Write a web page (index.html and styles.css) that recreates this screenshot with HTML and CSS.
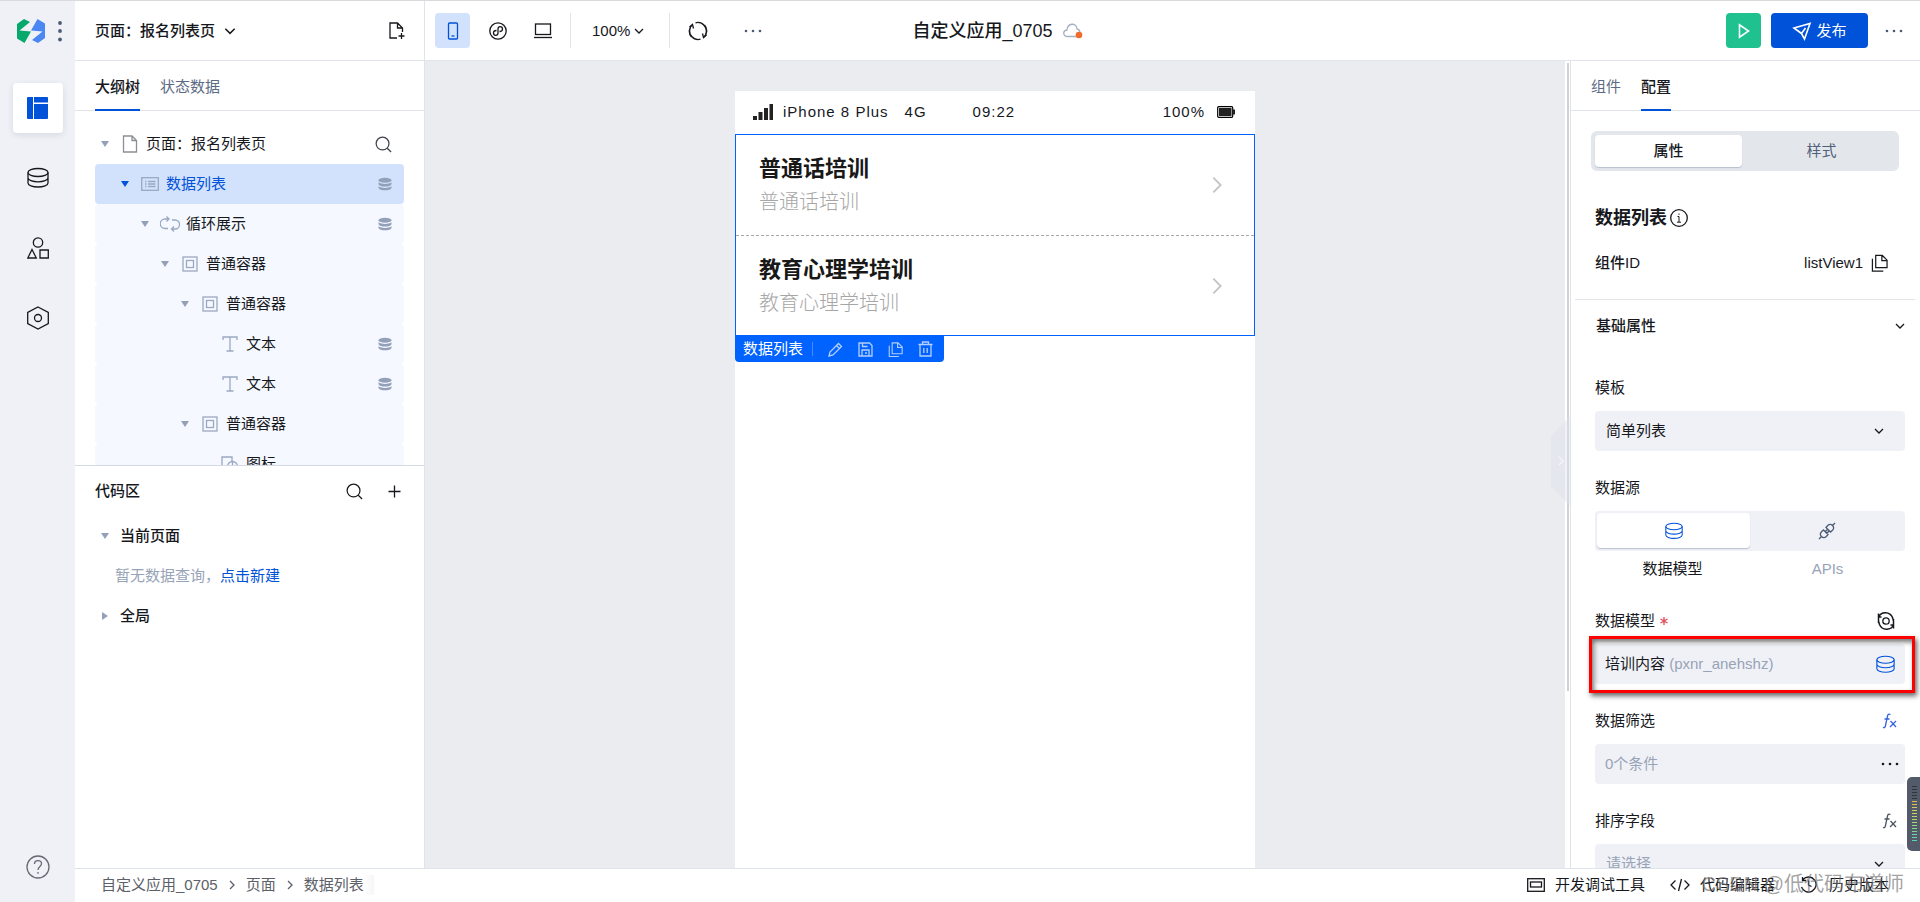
FILE: index.html
```html
<!DOCTYPE html>
<html lang="zh-CN">
<head>
<meta charset="utf-8">
<title>自定义应用_0705</title>
<link rel="stylesheet" href="styles.css">
</head>
<body>
<svg class="sprite" aria-hidden="true">
  <symbol id="chev" viewBox="0 0 12 12"><path d="M2 4l4 4 4-4"/></symbol>
  <symbol id="chev-r" viewBox="0 0 12 12"><path d="M4 2l4 4-4 4"/></symbol>
  <symbol id="search" viewBox="0 0 18 18"><circle cx="8" cy="8" r="6.8"/><path d="M13 13l4 4"/></symbol>
  <symbol id="db" viewBox="0 0 22 22"><ellipse cx="11" cy="5.5" rx="10" ry="4"/><path d="M1 5.500v10.500c0 2.200 4.500 4 10 4s10-1.800 10-4V5.500M1 10.800c0 2.200 4.500 4 10 4s10-1.800 10-4"/></symbol>
  <symbol id="stack" viewBox="0 0 14 14"><ellipse cx="7" cy="3.200" rx="6.500" ry="2.500"/><path d="M.5 5.300C2 6.600 4.500 7 7 7s5-.4 6.500-1.700v2C13 8.800 10.500 9.600 7 9.600S1 8.800.5 7.300zM.5 9.300C2 10.600 4.500 11 7 11s5-.4 6.500-1.700v1.700C13 12.500 10.500 13.300 7 13.300S1 12.500.5 11z"/></symbol>
  <symbol id="box" viewBox="0 0 16 16"><rect x="1" y="1" width="14" height="14"/><rect x="4.500" y="4.500" width="7" height="7"/></symbol>
  <symbol id="text" viewBox="0 0 16 16"><path d="M1 4V1h14v3M8 1v14M4.500 15h7"/></symbol>
  <symbol id="copy" viewBox="0 0 18 18"><path d="M5 1h7l5 5v8H5zM11.500 1v5.500H17M1.500 4.500v13H13"/></symbol>
  <symbol id="fx" viewBox="0 0 16 16"><path d="M8.500 1.500C6.500.5 5.800 1.500 5.400 3.500L3.500 12.500C3.100 14.500 2.200 15 1 14.500M2.500 6h5M8.500 8l5.500 6M14 8l-6 6"/></symbol>
  <symbol id="dots" viewBox="0 0 18 4"><circle cx="2" cy="2" r="1.300"/><circle cx="9" cy="2" r="1.300"/><circle cx="16" cy="2" r="1.300"/></symbol>
</svg>

<div class="app">
  <nav class="rail" aria-label="主导航">
    <div class="brand">
      <svg width="28" height="24" viewBox="0 0 28 24"><path fill="#07a86b" d="M0 5L7 0l6 3L2.500 11.500 14 12.500 7.500 24 0 19.500z"/><path fill="#4a87f3" d="M28 19l-7 5-6-3 10.500-8.500L14 11.500 20.500 0 28 4.500z"/></svg>
      <svg class="solid slate" width="4" height="22" viewBox="0 0 4 22"><circle cx="2" cy="3" r="1.900"/><circle cx="2" cy="11" r="1.900"/><circle cx="2" cy="19.500" r="1.900"/></svg>
    </div>
    <button class="rail-item active" aria-label="页面"><svg width="22" height="22" viewBox="0 0 22 22"><path fill="#0052d9" d="M1 0h5v22H1a1 1 0 0 1-1-1V1a1 1 0 0 1 1-1zM7 0h13a1 1 0 0 1 1 1v4.500H7zM7 7h14v14a1 1 0 0 1-1 1H7z"/></svg></button>
    <button class="rail-item" aria-label="数据"><svg class="line" width="22" height="22"><use href="#db"/></svg></button>
    <button class="rail-item" aria-label="组件"><svg class="line" width="22" height="22" viewBox="0 0 22 22"><circle cx="11" cy="5.500" r="4.700"/><path d="M5 12.500L9.300 21H.8zM13 13h8.300v8H13z"/></svg></button>
    <button class="rail-item" aria-label="设置"><svg class="line" width="22" height="24" viewBox="0 0 22 24"><path d="M11 1l10.300 5.500v11L11 23 .7 17.500v-11z"/><circle cx="11" cy="12" r="3.500"/></svg></button>
    <button class="rail-item help" aria-label="帮助"><svg class="line" width="24" height="24" viewBox="0 0 24 24"><circle cx="12" cy="12" r="11"/><path d="M8.500 9c0-2 1.500-3.300 3.500-3.300S15.500 7 15.500 8.700C15.500 11.500 12 11.500 12 15M12 17v1.800"/></svg></button>
  </nav>

  <div class="main">
    <header class="topbar">
      <div class="start">
        <div class="page-pick">
          <button class="plain strong">页面：报名列表页<svg class="line" width="14" height="14"><use href="#chev"/></svg></button>
          <button class="plain" aria-label="新建页面"><svg class="line" width="17" height="20" viewBox="0 0 17 20"><path d="M8 17H1V2h7.500l5 5v4M8.500 2v5h5M12.500 12v6M9.500 15h6"/></svg></button>
        </div>
        <div class="tools">
          <button class="tool on" aria-label="手机"><svg class="line" width="12" height="18" viewBox="0 0 12 18"><rect x="1.500" y="1" width="9" height="16" rx="1"/><path d="M4.500 14h3"/></svg></button>
          <button class="tool" aria-label="小程序"><svg class="line" width="18" height="18" viewBox="0 0 18 18"><circle cx="9" cy="9" r="8.200"/><path d="M7.500 8.500C5.500 8.500 4.500 9.500 4.500 11s1 2.300 2.200 2.300S9 12.500 9 11V7c0-1.500.8-2.300 2.200-2.300S13.500 5.500 13.500 7s-1 2.500-3 2.500"/></svg></button>
          <button class="tool" aria-label="电脑"><svg class="line" width="18" height="16" viewBox="0 0 18 16"><rect x="1.500" y="1" width="15" height="10.500"/><path d="M0 14.500h18"/></svg></button>
          <span class="rule"></span>
          <button class="plain zoom">100%<svg class="line" width="12" height="12"><use href="#chev"/></svg></button>
          <span class="rule"></span>
          <button class="tool" aria-label="刷新"><svg class="line" width="20" height="20" viewBox="0 0 20 20"><path d="M7.500 1.800A8.500 8.500 0 0 1 17.500 13.500M12.500 18.200A8.500 8.500 0 0 1 2.500 6.500M3.500 16A8.500 8.500 0 0 1 4 4M16.500 4A8.500 8.500 0 0 1 16 16"/><path d="M1.500 6L4.500 3.500 5.500 7.500M18.500 14l-3 2.500-1-4"/></svg></button>
          <button class="tool more" aria-label="更多"><svg class="solid slate" width="18" height="4"><use href="#dots"/></svg></button>
        </div>
      </div>
      <div class="app-title"><h1>自定义应用_0705</h1><svg class="cloud" width="20" height="16" viewBox="0 0 20 16"><path d="M5 13.500C-.5 13.500-.5 7.500 4 7 4.500-.5 13.500-.5 14 6c4 .5 4 7.500-1 7.500z"/><circle cx="16" cy="12" r="3.300"/></svg></div>
      <div class="actions">
        <button class="run" aria-label="预览"><svg width="12" height="16" viewBox="0 0 12 16"><path d="M1.500 1.800v12.400L10.500 8z"/></svg></button>
        <button class="publish"><svg width="20" height="20" viewBox="0 0 20 20"><path d="M2 7L18 2.500 12.500 18l-3-5.500zM9.500 12.500l4-5.500M5.500 9.500l4 3"/></svg>发布</button>
        <button class="plain" aria-label="更多"><svg class="solid slate" width="18" height="4"><use href="#dots"/></svg></button>
      </div>
    </header>

    <div class="work">
      <aside class="left">
        <div class="tabs"><button class="tab sel">大纲树</button><button class="tab">状态数据</button></div>
        <div class="tree">
          <div class="row l0"><i class="tri"></i><span class="ico"><svg class="line" width="16" height="18" viewBox="0 0 16 18"><path d="M1.500 1H10l4.500 4.500V17h-13zM10 1v4.500h4.500"/></svg></span><span>页面：报名列表页</span><button class="plain end" aria-label="搜索"><svg class="line" width="17" height="17"><use href="#search"/></svg></button></div>
          <div class="row l1 cur"><i class="tri"></i><span class="ico"><svg class="line" width="18" height="14" viewBox="0 0 18 14"><rect x=".7" y=".7" width="16.600" height="12.600"/><path d="M4 4.500h1.500M4 7h1.500M4 9.500h1.500M7 4.500h7.500M7 7h7.500M7 9.500h7.500"/></svg></span><span>数据列表</span><svg class="stack end" width="14" height="14"><use href="#stack"/></svg></div>
          <div class="row l2"><i class="tri"></i><span class="ico"><svg class="line" width="20" height="16" viewBox="0 0 20 16"><path d="M9 3H5a4.500 4.500 0 0 0 0 9.500h3M6.500.5L9 3 6.500 5.500M12 4h3a4.300 4.300 0 0 1 0 9H11.500M14 10.500L11.500 13l2.500 2.500"/></svg></span><span>循环展示</span><svg class="stack end" width="14" height="14"><use href="#stack"/></svg></div>
          <div class="row l3"><i class="tri"></i><span class="ico"><svg class="line" width="16" height="16"><use href="#box"/></svg></span><span>普通容器</span></div>
          <div class="row l4"><i class="tri"></i><span class="ico"><svg class="line" width="16" height="16"><use href="#box"/></svg></span><span>普通容器</span></div>
          <div class="row l5"><i class="tri none"></i><span class="ico"><svg class="line" width="16" height="16"><use href="#text"/></svg></span><span>文本</span><svg class="stack end" width="14" height="14"><use href="#stack"/></svg></div>
          <div class="row l5"><i class="tri none"></i><span class="ico"><svg class="line" width="16" height="16"><use href="#text"/></svg></span><span>文本</span><svg class="stack end" width="14" height="14"><use href="#stack"/></svg></div>
          <div class="row l4"><i class="tri"></i><span class="ico"><svg class="line" width="16" height="16"><use href="#box"/></svg></span><span>普通容器</span></div>
          <div class="row l5"><i class="tri none"></i><span class="ico"><svg class="line" width="18" height="16" viewBox="0 0 18 16"><path d="M6 11H1V1h10v4"/><circle cx="11.500" cy="10.500" r="5"/><path d="M11.500 5.500V11"/></svg></span><span>图标</span></div>
        </div>
        <section class="code">
          <div class="code-head"><h2>代码区</h2><button class="plain" aria-label="搜索代码"><svg class="line" width="17" height="17"><use href="#search"/></svg></button><button class="plain" aria-label="新建"><svg class="line" width="13" height="13" viewBox="0 0 13 13"><path d="M6.500 0.500v12M.5 6.500h12"/></svg></button></div>
          <div class="code-row strong"><i class="tri"></i><span>当前页面</span></div>
          <div class="code-row empty"><span>暂无数据查询，<a href="#new">点击新建</a></span></div>
          <div class="code-row strong"><i class="tri shut"></i><span>全局</span></div>
        </section>
      </aside>

      <main class="canvas">
        <div class="phone">
          <div class="status">
            <svg class="signal" width="20" height="16" viewBox="0 0 20 16"><path d="M0 12h4v4H0zM5.500 8h4v8h-4zM11 4h4v12h-4zM16.500 0H20v16h-3.500z"/></svg>
            <span>iPhone 8 Plus</span><span class="net">4G</span><span class="time">09:22</span><span class="power">100%</span>
            <svg width="18" height="12" viewBox="0 0 18 12"><rect x=".7" y=".7" width="15" height="10.600" rx="1" fill="none" stroke="#000" stroke-width="1.200"/><path d="M2 2h12.500v8H2zM16 3.500h2v5h-2z"/></svg>
          </div>
          <div class="list">
            <div class="item"><div><h3>普通话培训</h3><p>普通话培训</p></div><svg width="22" height="22" viewBox="0 0 12 12"><use href="#chev-r"/></svg></div>
            <div class="item"><div><h3>教育心理学培训</h3><p>教育心理学培训</p></div><svg width="22" height="22" viewBox="0 0 12 12"><use href="#chev-r"/></svg></div>
          </div>
          <div class="tag">
            <span>数据列表</span>
            <button class="plain" aria-label="编辑"><svg class="line" width="15" height="15" viewBox="0 0 15 15"><path d="M1 14l1-4 8.500-8.500 3 3L5 13zM8.500 3.500l3 3"/></svg></button>
            <button class="plain" aria-label="保存"><svg class="line" width="15" height="15" viewBox="0 0 15 15"><path d="M1 1h10.500L14 3.500V14H1zM4.500 1v3.500h5M4 14V8h7v6M7 11h2"/></svg></button>
            <button class="plain" aria-label="复制"><svg class="line" width="15" height="15"><use href="#copy"/></svg></button>
            <button class="plain" aria-label="删除"><svg class="line" width="15" height="16" viewBox="0 0 15 16"><path d="M.5 3.500h14M4.500 3V1h6v2M2 3.500V15h11V3.500M5.800 7v5M9.200 7v5"/></svg></button>
          </div>
        </div>
      </main>

      <aside class="right">
        <div class="gutter"><i class="thumb"></i></div>
        <button class="fold" aria-label="收起"><svg width="12" height="12"><use href="#chev-r"/></svg></button>
        <div class="panel">
          <div class="tabs"><button class="tab">组件</button><button class="tab sel">配置</button></div>
          <div class="config">
            <div class="switch"><button class="sel">属性</button><button>样式</button></div>
            <div class="name"><h2>数据列表</h2><svg class="line" width="18" height="18" viewBox="0 0 18 18"><circle cx="9" cy="9" r="8.300"/><path d="M7.500 7.500H9V13M7 13.200h4M9 4.500v1.300" stroke-width="1"/></svg></div>
            <div class="ident"><strong>组件ID</strong><span>listView1</span><button class="plain" aria-label="复制ID"><svg class="line" width="17" height="18"><use href="#copy"/></svg></button></div>
            <button class="plain section">基础属性<svg class="line" width="12" height="12"><use href="#chev"/></svg></button>
            <div class="form">
              <div class="field"><label class="cap" for="tpl">模板</label>
                <div class="select"><select id="tpl"><option>简单列表</option></select><svg class="line" width="12" height="12"><use href="#chev"/></svg></div></div>
              <div class="field"><div class="cap">数据源</div>
                <div class="source"><button class="sel" aria-label="数据模型"><svg class="line" width="18" height="18"><use href="#db"/></svg></button><button aria-label="APIs"><svg class="line" width="18" height="18" viewBox="0 0 18 18"><path d="M1 17l2.500-2.500M14.500 3.500L17 1M3.500 14.500c-1.500-1.500-1.200-3.500 0-4.800L5.500 8l4.500 4.500-1.700 2c-1.300 1.200-3.300 1.500-4.800 0zM14.500 3.500c1.500 1.500 1.200 3.500 0 4.800L12.500 10 8 5.500l1.700-2c1.300-1.200 3.300-1.500 4.800 0zM7.200 9.700L9.700 7.200M8.800 11.300l2.500-2.500"/></svg></button></div>
                <div class="names"><span>数据模型</span><span class="dim">APIs</span></div></div>
              <div class="field"><div class="cap"><span>数据模型</span><svg class="req" role="img" aria-label="必填" width="8" height="8" viewBox="0 0 8 8"><path d="M4 0v8M.5 2l7 4M7.500 2l-7 4"/></svg><button class="plain end refresh" aria-label="刷新模型"><svg class="line" width="18" height="18" viewBox="0 0 18 18"><circle cx="9" cy="9" r="3.200"/><path d="M1.500 11V1.500M1.500 5A7.700 7.700 0 0 1 15.500 5.500L16.500 9M16.500 7v9.500M16.500 13A7.700 7.700 0 0 1 2.500 12.500L1.500 9M1.500 5h3M16.500 13h-3" stroke-width="1.500"/></svg></button></div>
                <button class="box model"><span>培训内容 <span class="dim">(pxnr_anehshz)</span></span><svg class="line" width="19" height="19"><use href="#db"/></svg></button></div>
              <div class="field"><div class="cap"><span>数据筛选</span><button class="plain end fx blue" aria-label="筛选表达式"><svg class="line" width="16" height="16"><use href="#fx"/></svg></button></div>
                <button class="box"><span class="dim">0个条件</span><svg class="solid" width="18" height="4"><use href="#dots"/></svg></button></div>
              <div class="field"><div class="cap"><label for="sort">排序字段</label><button class="plain end fx" aria-label="排序表达式"><svg class="line" width="16" height="16"><use href="#fx"/></svg></button></div>
                <div class="select"><select id="sort" class="dim"><option>请选择</option></select><svg class="line" width="12" height="12"><use href="#chev"/></svg></div></div>
            </div>
          </div>
        </div>
      </aside>
    </div>

    <footer class="bottom">
      <div class="crumbs"><a href="#app">自定义应用_0705</a><svg class="line" width="12" height="12"><use href="#chev-r"/></svg><a href="#page">页面</a><svg class="line" width="12" height="12"><use href="#chev-r"/></svg><a class="here" href="#list">数据列表</a></div>
      <div class="dev">
        <button class="plain"><svg class="line" width="18" height="14" viewBox="0 0 18 14"><rect x=".7" y=".7" width="16.600" height="12.600"/><rect x="3.500" y="4" width="11" height="5"/></svg>开发调试工具</button>
        <button class="plain"><svg class="line" width="20" height="14" viewBox="0 0 20 14"><path d="M5.500 2.500L1 7l4.500 4.500M14.500 2.500L19 7l-4.500 4.500M11.500 1l-3 12"/></svg>代码编辑器</button>
        <button class="plain hist"><svg class="line" width="17" height="17" viewBox="0 0 17 17"><path d="M3 3.500a7.500 7.500 0 1 1-1.500 7.500M2.500 1v3.500H6M8.500 4.500V9l3 1.500"/></svg>历史版本</button>
      </div>
    </footer>
  </div>
  <div class="watermark">CSDN @低代码布道师</div>
  <div class="meter"><i></i></div>
</div>
</body>
</html>
```
FILE: styles.css
```css
* { box-sizing: border-box; }
body, h1, h2, h3, p { margin: 0; }
body, button, select {
  font-family: "Liberation Sans", "Noto Sans CJK SC", sans-serif;
  font-size: 15px;
  line-height: 20px;
  color: #16181d;
}
button { border: 0; padding: 0; background: none; cursor: pointer; }
a { text-decoration: none; }
svg { flex: none; display: block; fill: none; stroke: currentColor; stroke-width: 1.3; }
.sprite { position: absolute; width: 0; height: 0; }
.solid, .stack { fill: currentColor; stroke: none; }
.slate { color: #4b5b76; }
.plain { display: flex; align-items: center; }
.strong { font-weight: 500; }
.dim { color: #97a3b7; }
.end { margin-left: auto; }

.app { position: relative; display: flex; height: 100vh; overflow: hidden; border-top: 1px solid #d9dadd; background: #fff; }
.main { flex: 1; min-width: 0; display: flex; flex-direction: column; }

.rail { width: 75px; flex: none; display: flex; flex-direction: column; align-items: center; gap: 20px; background: #eff1f6; padding-bottom: 10px; }
.brand { height: 62px; width: 100%; display: flex; align-items: center; gap: 13px; padding: 0 13px 2px 17px; }
.brand svg { stroke: none; }
.rail-item { width: 50px; height: 50px; display: flex; align-items: center; justify-content: center; border-radius: 4px; }
.rail-item.active { background: #fff; box-shadow: 0 2px 6px rgba(30, 50, 90, .12); }
.rail-item.active svg { stroke: none; }
.help { margin-top: auto; color: #666a73; }

.topbar { height: 60px; flex: none; display: grid; grid-template-columns: 1fr auto 1fr; align-items: center; border-bottom: 1px solid #e1e4ea; }
.start { height: 59px; display: flex; align-items: center; }
.page-pick { width: 350px; flex: none; height: 100%; display: flex; align-items: center; justify-content: space-between; padding: 0 18px 0 20px; border-right: 1px solid #dfe3ea; }
.page-pick .strong { gap: 8px; }
.tools { display: flex; align-items: center; padding-left: 10px; }
.tool { width: 35px; height: 35px; margin-right: 10px; display: flex; align-items: center; justify-content: center; border-radius: 4px; }
.tool.on { background: #d3e2fc; color: #0052d9; }
.rule { width: 1px; height: 35px; background: #e1e4ea; }
.zoom { padding: 0 24px 0 21px; gap: 3px; }
.rule + .tool { margin: 0 20px 0 10px; }
.app-title { display: flex; align-items: center; gap: 10px; }
.app-title h1 { font-size: 18px; line-height: 24px; font-weight: 500; }
.cloud { stroke: #a6b0c3; }
.cloud circle { fill: #f06a2b; stroke: none; }
.actions { display: flex; align-items: center; justify-content: flex-end; gap: 10px; padding-right: 17px; }
.actions svg { stroke: currentColor; stroke-width: 1.6; }
.actions .solid { stroke: none; }
.actions .plain { padding-left: 7px; }
.run { width: 35px; height: 35px; display: flex; align-items: center; justify-content: center; background: #1fc28f; color: #fff; border-radius: 4px; }
.publish { width: 97px; height: 35px; display: flex; align-items: center; justify-content: center; gap: 4px; background: #0052d9; color: #fff; border-radius: 4px; }

.work { flex: 1; min-height: 0; display: flex; }
.left { width: 350px; flex: none; display: flex; flex-direction: column; border-right: 1px solid #dfe3ea; }
.tabs { height: 50px; flex: none; display: flex; gap: 20px; padding: 0 20px; border-bottom: 1px solid #e1e4ea; }
.tab { height: 50px; padding-top: 4px; color: #5b6b85; border-bottom: 2px solid transparent; }
.tab.sel { color: #16181d; font-weight: 500; border-color: #0052d9; }
.tree { flex: 341; min-height: 0; overflow: hidden; padding: 13px 20px 0; border-bottom: 1px solid #d5d9e1; }
.row { height: 40px; display: flex; align-items: center; padding-right: 12px; border-radius: 4px; background: #f5f8ff; }
.row.l0 { background: none; }
.l0 .line { color: #8b8e95; }
.l0 .end .line { color: #3c4048; }
.l1 { padding-left: 20px; }
.l2 { padding-left: 40px; }
.l3 { padding-left: 60px; }
.l4 { padding-left: 80px; }
.l5 { padding-left: 100px; }
.row.cur { background: #d3e2fc; color: #0052d9; }
.ico { width: 20px; margin: 0 6px 0 5px; display: flex; justify-content: center; color: #9aa8c1; }
.stack { color: #93a1b8; }
.tri { width: 20px; flex: none; display: flex; justify-content: center; }
.tri::before { content: ""; border: 4px solid transparent; border-top: 6px solid #93a1b8; border-bottom: 0; }
.cur .tri::before { border-top-color: #0052d9; }
.tri.none { visibility: hidden; }
.tri.shut::before { border: 4px solid transparent; border-left: 6px solid #93a1b8; border-right: 0; }
.code { flex: 402; min-height: 0; padding: 0 20px; }
.code-head { height: 50px; display: flex; align-items: center; gap: 25px; padding-right: 3px; }
.code-head h2 { flex: 1; font-size: 15px; font-weight: 500; }
.code-row { height: 40px; display: flex; align-items: center; gap: 5px; }
.empty { padding-left: 20px; color: #97a3b7; }
.empty a { color: #0052d9; }

.canvas { flex: 1; min-width: 0; overflow: hidden; background: #ebecf0; padding-top: 30px; }
.phone { width: 520px; min-height: 100%; margin: 0 auto; background: #fff; }
.status { height: 43px; display: flex; align-items: center; padding: 0 20px 2px 18px; letter-spacing: 1px; }
.status svg { stroke: none; fill: #222; }
.signal { margin-right: 10px; }
.net { margin-left: 16px; }
.time { margin-left: 46px; }
.power { margin: 0 12px 0 auto; }
.list { border: 1px solid #0062ff; }
.item { height: 100px; display: flex; align-items: center; justify-content: space-between; padding: 0 26px 0 23px; }
.item + .item { border-top: 1px dashed #a8a8a8; }
.item h3 { font-size: 22px; line-height: 34px; font-weight: 700; color: #181818; }
.item p { font-size: 20px; line-height: 32px; color: #a6a6a6; font-weight: 300; }
.item svg { color: #c4c4c4; stroke-width: 1; }
.tag { width: max-content; height: 26px; display: flex; align-items: center; gap: 15px; padding: 0 11px 0 8px; color: #fff; background: #0062ff; border-radius: 0 0 4px 4px; }
.tag span { line-height: 14px; padding-right: 9px; border-right: 1px solid #468cff; }
.tag .plain { color: #b5d0ff; }

.right { width: 355px; flex: none; display: flex; position: relative; }
.gutter { width: 5px; padding: 2px 1px 0 2px; }
.thumb { display: block; height: 78%; background: #d0d1d3; }
.fold { position: absolute; left: -14px; top: 44%; width: 19px; height: 90px; display: flex; align-items: center; justify-content: center; background: rgba(222, 227, 238, .45); color: #f4f6fa; clip-path: polygon(100% 0, 100% 100%, 0 78%, 0 22%); }
.panel { flex: 1; min-width: 0; overflow: hidden; border-left: 1px solid #dfe3ea; }
.config { padding: 20px 0 0; }
.switch { height: 40px; display: flex; gap: 6px; margin: 0 21px 0 20px; padding: 4px; border-radius: 6px; background: #e3e7ec; }
.switch button { flex: 1; color: #52617a; border-radius: 4px; height: 32px; }
.switch .sel, .source .sel { background: #fff; color: #16181d; font-weight: 500; box-shadow: 0 1px 1px #b6c0d0; }
.name { height: 40px; margin: 27px 24px 0; display: flex; align-items: center; gap: 3px; }
.name h2 { font-size: 18px; line-height: 24px; font-weight: 700; }
.ident { height: 40px; margin: 5px 32px 16px 24px; display: flex; align-items: center; gap: 8px; }
.ident strong { flex: 1; font-weight: 500; }
.section { width: calc(100% - 9px); height: 53px; margin-left: 4px; padding: 0 9px 0 21px; justify-content: space-between; border-top: 1px solid #e3e5e9; font-weight: 500; }
.form { padding: 24px 15px 0 24px; }
.field { margin-bottom: 25px; }
.cap { height: 24px; margin-bottom: 11px; display: flex; align-items: center; }
.req { margin-left: 5px; color: #dd4b5b; }
.refresh { margin-right: 10px; }
.fx { margin-right: 7px; color: #4b5565; }
.fx.blue { color: #3464e0; }
.select { height: 40px; display: grid; align-items: center; background: #f0f1f6; border-radius: 4px; }
.select select, .select svg { grid-area: 1 / 1; }
.select select { height: 40px; width: 100%; padding: 0 11px; border: 0; background: none; appearance: none; }
.select .dim { color: #97a3b7; }
.select svg { justify-self: end; margin-right: 20px; pointer-events: none; }
.source { height: 40px; display: flex; padding: 2px; background: #f0f1f6; border-radius: 4px; }
.source button { flex: 1; height: 35px; display: flex; align-items: center; justify-content: center; border-radius: 4px; color: #4b5b76; }
.source .sel { color: #0052d9; }
.names { display: flex; padding: 8px 0 5px; text-align: center; }
.names span { flex: 1; }
.box { position: relative; width: 100%; height: 40px; display: flex; align-items: center; justify-content: space-between; padding: 0 6px 0 10px; background: #f0f1f6; border-radius: 4px; }
.model { padding-right: 10px; }
.model > svg { color: #0052d9; }
.model::after { content: ""; position: absolute; inset: -8px -10px -9px -6px; border: 3px solid #f00; box-shadow: 2px 3px 5px rgba(0, 0, 0, .6), inset 2px 3px 5px rgba(0, 0, 0, .55); }

.bottom { height: 34px; flex: none; display: flex; align-items: center; justify-content: space-between; padding: 0 31px 2px 26px; border-top: 1px solid #dfe3ea; }
.crumbs { display: flex; align-items: center; gap: 8px; color: #5c6068; }
.crumbs a { color: inherit; }
.here { padding-right: 10px; background: linear-gradient(90deg, #fff 85%, #f5f6f8); }
.dev { display: flex; align-items: center; gap: 25px; }
.dev .plain { gap: 10px; }
.dev .hist { gap: 12px; }
.watermark { position: absolute; right: 16px; bottom: 4px; font-size: 20px; line-height: 28px; color: rgba(110, 110, 110, .65); pointer-events: none; }
.meter { position: absolute; right: 0; bottom: 51px; width: 13px; height: 74px; padding: 9px 3px 9px 5px; border-radius: 5px 0 0 5px; background: #535a69; }
.meter i { display: block; height: 100%; background: repeating-linear-gradient(transparent 0 1px, #535a69 1px 3px), linear-gradient(#30343c 25%, #e8b44a 26%, #c8d860 50%, #4fd8b0); }
```
